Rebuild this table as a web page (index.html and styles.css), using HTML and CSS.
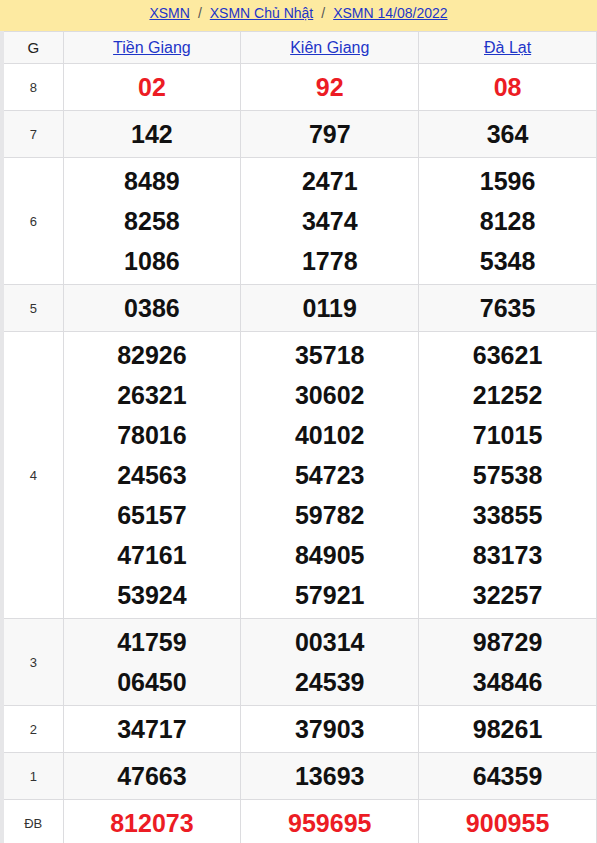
FILE: index.html
```html
<!DOCTYPE html>
<html lang="vi">
<head>
<meta charset="utf-8">
<link rel="stylesheet" href="styles.css">
</head>
<body>
<div class="crumb">
  <a href="#">XSMN</a><span class="sep">/</span><a href="#">XSMN Chủ Nhật</a><span class="sep">/</span><a href="#">XSMN 14/08/2022</a>
</div>
<div class="wrap">
<table class="kq">
  <colgroup><col class="c0"><col><col><col></colgroup>
  <thead>
    <tr class="hd"><th class="lbl-g">G</th><th><a href="#">Tiền Giang</a></th><th><a href="#">Kiên Giang</a></th><th><a href="#">Đà Lạt</a></th></tr>
  </thead>
  <tbody>
    <tr><td class="lbl">8</td><td class="red"><div>02</div></td><td class="red"><div>92</div></td><td class="red"><div>08</div></td></tr>
    <tr class="alt"><td class="lbl">7</td><td><div>142</div></td><td><div>797</div></td><td><div>364</div></td></tr>
    <tr><td class="lbl">6</td><td><div>8489</div><div>8258</div><div>1086</div></td><td><div>2471</div><div>3474</div><div>1778</div></td><td><div>1596</div><div>8128</div><div>5348</div></td></tr>
    <tr class="alt"><td class="lbl">5</td><td><div>0386</div></td><td><div>0119</div></td><td><div>7635</div></td></tr>
    <tr><td class="lbl">4</td>
      <td><div>82926</div><div>26321</div><div>78016</div><div>24563</div><div>65157</div><div>47161</div><div>53924</div></td>
      <td><div>35718</div><div>30602</div><div>40102</div><div>54723</div><div>59782</div><div>84905</div><div>57921</div></td>
      <td><div>63621</div><div>21252</div><div>71015</div><div>57538</div><div>33855</div><div>83173</div><div>32257</div></td></tr>
    <tr class="alt"><td class="lbl">3</td><td><div>41759</div><div>06450</div></td><td><div>00314</div><div>24539</div></td><td><div>98729</div><div>34846</div></td></tr>
    <tr><td class="lbl">2</td><td><div>34717</div></td><td><div>37903</div></td><td><div>98261</div></td></tr>
    <tr class="alt"><td class="lbl">1</td><td><div>47663</div></td><td><div>13693</div></td><td><div>64359</div></td></tr>
    <tr><td class="lbl">ĐB</td><td class="red"><div>812073</div></td><td class="red"><div>959695</div></td><td class="red"><div>900955</div></td></tr>
  </tbody>
</table>
</div>
</body>
</html>
```
FILE: styles.css
```css
html, body {
  margin: 0;
  padding: 0;
  background: #fff;
  font-family: "Liberation Sans", Arial, sans-serif;
}
.crumb {
  height: 31px;
  line-height: 26px;
  background: #fdeaa1;
  text-align: center;
  font-size: 14px;
  color: #666;
}
.crumb a {
  color: #1e35c8;
  text-decoration: underline;
}
.crumb .sep {
  margin: 0 8px;
  color: #555;
}
.wrap {
  border-left: 4px solid #e6e6e8;
}
.kq {
  width: 100%;
  border-collapse: collapse;
  table-layout: fixed;
}
.kq col.c0 { width: 59px; }
.kq th, .kq td {
  border: 1px solid #dcdcdf;
  text-align: center;
  vertical-align: middle;
  padding: 3px 0;
}
.kq th:first-child, .kq td:first-child { border-left: none; }
.hd th {
  background: #f8f8f8;
  font-weight: 400;
  font-size: 16px;
  line-height: 19px;
  padding: 6px 0;
}
.hd th a {
  color: #1e35c8;
  text-decoration: underline;
}
.hd th.lbl-g {
  color: #222;
  font-size: 15px;
}
.alt td { background: #f8f8f8; }
.kq td div {
  font-size: 25px;
  font-weight: 700;
  line-height: 40px;
  color: #111;
}
.kq td.red div { color: #ec1c24; }
.kq td.lbl {
  font-size: 13px;
  color: #333;
  font-weight: 400;
}
```
